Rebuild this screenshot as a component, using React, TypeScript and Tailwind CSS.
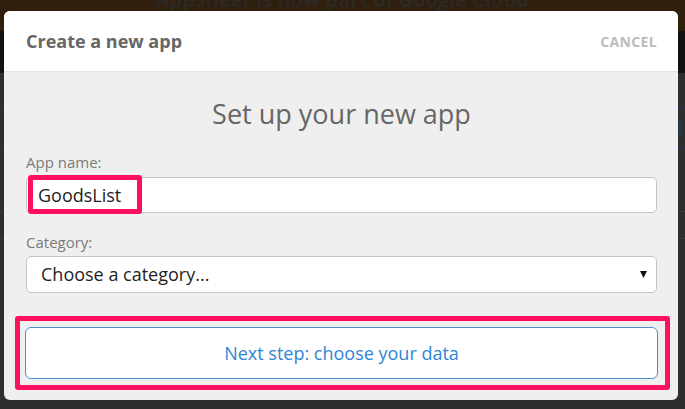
import { useState } from "react";

const Backdrop = () => {
  return (
    <div className="flex flex-col w-[685px] h-[409px] bg-[#2e2e2e] overflow-hidden">
      <div className="h-[31px] bg-[#301f0d] flex justify-center overflow-hidden">
        <span className="-mt-[13px] text-[20px] font-bold text-[#2c2823] leading-[26px] whitespace-nowrap">
          AppSheet is now part of Google Cloud
        </span>
      </div>
      <div className="h-[42px] bg-[#121212]" />
      <div className="h-[35px]" />
      <div className="h-[40px] border-t border-b border-[#1d3550] flex justify-end items-center pr-[1px]">
        <span className="text-[20px] font-bold text-[#1d3a5c]">H</span>
      </div>
      <div className="h-[64px] border-b border-[#3a3a3a]" />
      <div className="h-[27px] border-b border-[#3a3a3a]" />
    </div>
  );
};

const CreateAppDialog = () => {
  const [name, setName] = useState("GoodsList");

  return (
    <div className="absolute left-[4px] top-[11px] w-[674px] h-[389px] rounded-[6px] overflow-hidden bg-[#efefef] flex flex-col">
      <div className="h-[61px] bg-white border-b border-[#e2e2e2] flex items-center justify-between pl-[22px] pr-[21px]">
        <h1 className="text-[18px] font-bold text-[#666]">Create a new app</h1>
        <button className="text-[14px] font-bold text-[#bcbcbc] tracking-wide">
          CANCEL
        </button>
      </div>

      <div className="flex flex-col pl-[22px] pr-[21px] pt-[24px]">
        <h2 className="text-center text-[27px] leading-[36px] text-[#666]">
          Set up your new app
        </h2>

        <label className="mt-[20px] text-[15px] leading-[20px] text-[#7a7a7a]">
          App name:
        </label>
        <div className="relative mt-[5px]">
          <input
            value={name}
            onChange={(e) => setName(e.target.value)}
            className="w-full h-[36px] bg-white border border-[#c4c4c4] rounded-[5px] pl-[11px] text-[18px] text-[#1e1e1e] outline-none"
          />
          <span className="absolute left-[2px] -top-[2px] w-[114px] h-[39px] border-[5px] border-[#ff105e] rounded-[3px] pointer-events-none" />
        </div>

        <label className="mt-[19px] text-[15px] leading-[20px] text-[#7a7a7a]">
          Category:
        </label>
        <div className="mt-[4px] h-[37px] bg-white border border-[#c4c4c4] rounded-[5px] flex items-center justify-between pl-[14px] pr-[9px]">
          <span className="text-[18px] text-[#1e1e1e]">Choose a category...</span>
          <svg width="7" height="7" viewBox="0 0 7 7">
            <polygon points="0,0 7,0 3.5,7" fill="#111" />
          </svg>
        </div>

        <div className="relative mt-[34px] -ml-[1px] -mr-[1px]">
          <button className="w-full h-[52px] bg-white border border-[#4a8fd6] rounded-[6px] text-[18px] text-[#2f86d5]">
            Next step: choose your data
          </button>
          <span className="absolute -left-[10px] -right-[12px] -top-[11px] -bottom-[11px] border-[5px] border-[#ff105e] rounded-[3px] pointer-events-none" />
        </div>
      </div>
    </div>
  );
};

const App = () => {
  return (
    <div className="relative w-[685px] h-[409px] overflow-hidden font-['Open_Sans',sans-serif]">
      <Backdrop />
      <CreateAppDialog />
    </div>
  );
};

export default App;
